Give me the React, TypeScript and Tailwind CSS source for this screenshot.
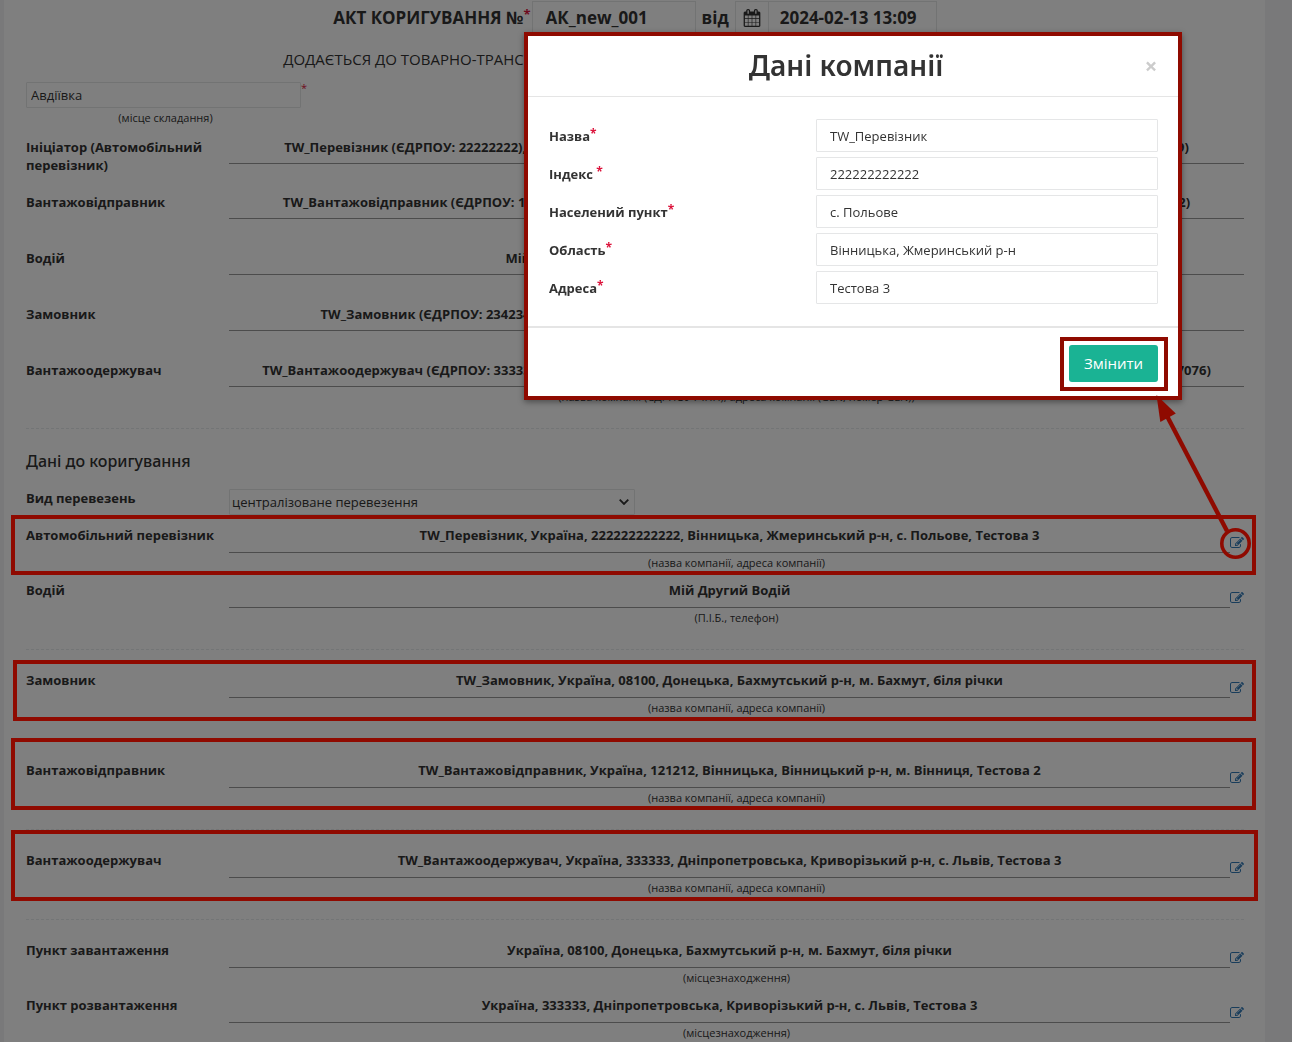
import React from 'react';

const requiredMark = 'font-bold text-[#dc143c]';

function PencilSquare() {
  return (
    <svg viewBox="0 0 1792 1792" className="size-[14px]" fill="currentColor" aria-hidden="true">
      <path d="M888 1184l116-116-152-152-116 116v56h96v96h56zM1328 464q-16-16-33 1l-350 350q-17 17-1 33t33-1l350-350q17-17 1-33zM1408 1058v190q0 119-84.5 203.5t-203.5 84.5h-832q-119 0-203.5-84.5t-84.5-203.5v-832q0-119 84.5-203.5t203.5-84.5h832q63 0 117 25 15 7 18 23 3 17-9 29l-49 49q-14 14-32 8-23-6-45-6h-832q-66 0-113 47t-47 113v832q0 66 47 113t113 47h832q66 0 113-47t47-113v-126q0-13 9-22l64-64q15-15 35-7t20 29zM1312 320l288 288-672 672h-288v-288zM1756 452l-92 92-288-288 92-92q28-28 68-28t68 28l152 152q28 28 28 68t-28 68z" />
    </svg>
  );
}

function Calendar() {
  return (
    <svg viewBox="0 0 1792 1792" className="size-[18px]" fill="currentColor" aria-hidden="true">
      <path d="M192 1664h288v-288h-288v288zM544 1664h320v-288h-320v288zM192 1312h288v-320h-288v320zM544 1312h320v-320h-320v320zM192 928h288v-288h-288v288zM928 1664h320v-288h-320v288zM544 928h320v-288h-320v288zM1312 1664h288v-288h-288v288zM928 1312h320v-320h-320v320zM576 448v-288q0-13-9.5-22.5t-22.5-9.5h-64q-13 0-22.5 9.5t-9.5 22.5v288q0 13 9.5 22.5t22.5 9.5h64q13 0 22.5-9.5t9.5-22.5zM1312 1312h288v-320h-288v320zM928 928h320v-288h-320v288zM1312 928h288v-288h-288v288zM1344 448v-288q0-13-9.5-22.5t-22.5-9.5h-64q-13 0-22.5 9.5t-9.5 22.5v288q0 13 9.5 22.5t22.5 9.5h64q13 0 22.5-9.5t9.5-22.5zM1728 384v1280q0 52-38 90t-90 38h-1408q-52 0-90-38t-38-90v-1280q0-52 38-90t90-38h128v-96q0-66 47-113t113-47h64q66 0 113 47t47 113v96h384v-96q0-66 47-113t113-47h64q66 0 113 47t47 113v96h128q52 0 90 38t38 90z" />
    </svg>
  );
}

function PartyRow({ label, value, caption }: { label: string; value: string; caption?: string }) {
  return (
    <div className="flex h-14 first:h-[55px]">
      <div className="w-[203px] shrink-0 pr-4 font-bold leading-[18px]">{label}</div>
      <div className="min-w-0 flex-1 text-center">
        <div className="flex h-[26px] justify-center border-b border-[#999] font-bold leading-[18px] whitespace-nowrap">
          {value}
        </div>
        {caption && <div className="text-[11px] leading-[20px]">{caption}</div>}
      </div>
    </div>
  );
}

type EditRowProps = {
  label: string;
  value: string;
  caption: string;
  highlight?: string;
  children?: React.ReactNode;
};

function EditRow({ label, value, caption, highlight, children }: EditRowProps) {
  return (
    <div className="relative flex h-[55px]">
      <div className="w-[203px] shrink-0 font-bold leading-[18px]">{label}</div>
      <div className="min-w-0 flex-1 text-center">
        <div className="flex">
          <div className="h-[27px] flex-1 border-b border-[#999] font-bold leading-[18px] whitespace-nowrap">
            {value}
          </div>
          <button type="button" aria-label={`Редагувати: ${label}`} className="mt-[10px] size-[14px] text-[#337ab7]">
            <PencilSquare />
          </button>
        </div>
        <div className="text-[11px] leading-[20px]">{caption}</div>
      </div>
      {highlight && <div className={`pointer-events-none absolute z-20 border-4 border-[#8f0a00] ${highlight}`} />}
      {children}
    </div>
  );
}

function Separator() {
  return <hr className="mt-[13px] mb-[21px] border-t border-dashed border-[#e7eaec]" />;
}

function Pointer() {
  return (
    <svg
      viewBox="1150 390 110 180"
      className="pointer-events-none absolute -top-[136px] -right-[16px] z-40 h-[180px] w-[110px]"
      fill="none"
      aria-hidden="true"
    >
      <circle cx="1235.5" cy="543.5" r="13.7" stroke="#8f0a00" strokeWidth="3.6" />
      <path d="M1167 416L1227 531" stroke="#8f0a00" strokeWidth="4.4" />
      <path d="M1156.5 395L1175.8 413.4L1160.3 422Z" fill="#8f0a00" />
    </svg>
  );
}

const fields = [
  { id: 'name', label: 'Назва', value: 'TW_Перевізник' },
  { id: 'index', label: 'Індекс ', value: '222222222222' },
  { id: 'city', label: 'Населений пункт', value: 'с. Польове' },
  { id: 'region', label: 'Область', value: 'Вінницька, Жмеринський р-н' },
  { id: 'address', label: 'Адреса', value: 'Тестова 3' },
];

function CompanyDialog() {
  return (
    <div className="pointer-events-none fixed inset-0 z-30 flex items-start justify-end pt-8 pr-[110px]">
      <div
        role="dialog"
        aria-labelledby="dialog-title"
        className="pointer-events-auto w-[658px] border-4 border-[#8f0a00] bg-white shadow-[0_2px_6px_rgba(0,0,0,0.4)]"
      >
        <div className="flex h-[61px] items-center border-b border-[#e5e5e5] px-5 pb-[2px]">
          <h4
            id="dialog-title"
            className="flex-1 text-center font-['Noto_Sans',sans-serif] text-[28px] leading-[30px] font-semibold"
          >
            Дані компанії
          </h4>
          <button type="button" aria-label="Закрити" className="w-[14px] text-[22px] leading-[20px] font-bold text-[#ccc]">
            ×
          </button>
        </div>
        <form className="flex flex-col gap-[5px] px-5 py-[22px]">
          {fields.map((f) => (
            <div key={f.id} className="flex items-center">
              <label htmlFor={f.id} className="w-[268px] pl-px font-bold whitespace-pre">
                {f.label}
                <span className={`align-[3px] text-[12px] leading-none ${requiredMark}`}>*</span>
              </label>
              <input
                id={f.id}
                defaultValue={f.value}
                className="h-[33px] min-w-0 flex-1 rounded-[1px] border border-[#e5e6e7] bg-white px-[13px]"
              />
            </div>
          ))}
        </form>
        <div className="flex justify-end border-t-2 border-[#e5e5e5] px-[10px] pt-[9px] pb-[5px]">
          <div className="border-4 border-[#8f0a00] pt-1 pr-[6px] pb-[5px] pl-[5px]">
            <button
              type="button"
              className="block h-[37px] w-[89px] rounded-[3px] bg-[#1ab394] pb-[2px] text-[15px] text-white"
            >
              Змінити
            </button>
          </div>
        </div>
      </div>
    </div>
  );
}

const company = '(назва компанії, адреса компанії)';

export default function App() {
  return (
    <div className="h-screen overflow-hidden bg-[#f3f3f4] font-['Open_Sans','Noto_Sans',sans-serif] text-[13px] leading-[18px] text-[#333]">
      <main className="mr-[27px] ml-1 min-h-full bg-white pt-px pr-[21px] pb-4 pl-[22px]">
        <div className="flex h-[33px] items-center justify-center text-[17px] font-bold">
          <label htmlFor="act-number" className="flex whitespace-nowrap">
            АКТ КОРИГУВАННЯ №<span className="-mt-1 pr-px text-[13px] text-[#dc143c]">*</span>
          </label>
          <input
            id="act-number"
            defaultValue="АК_new_001"
            className="h-[33px] w-[164px] border border-[#e5e6e7] px-[13px]"
          />
          <label htmlFor="act-date" className="px-[6px]">
            від
          </label>
          <span className="flex h-[33px] w-[33px] items-center justify-center border border-r-0 border-[#e5e6e7]">
            <Calendar />
          </span>
          <input
            id="act-date"
            defaultValue="2024-02-13 13:09"
            className="h-[33px] w-[169px] border border-[#e5e6e7] px-[11px]"
          />
        </div>
        <h2 className="mt-[15px] text-center text-[15px] leading-[20px] whitespace-nowrap">
          ДОДАЄТЬСЯ ДО ТОВАРНО-ТРАНСПОРТНОЇ НАКЛАДНОЇ № ТТН_new_0000001 ВІД 2024-02-13 13:05
        </h2>
        <div className="mt-[13px] flex items-start">
          <div className="w-[275px] text-center">
            <input
              id="place"
              aria-labelledby="place-label"
              defaultValue="Авдіївка"
              className="block h-[26px] w-full rounded-[1px] border border-[#e5e6e7] px-1"
            />
            <label id="place-label" htmlFor="place" className="block pl-1 text-[11px] leading-[20px]">
              (місце складання)
            </label>
          </div>
          <span className="text-[11px] leading-[12px] text-[#dc143c]">*</span>
        </div>

        <section className="mt-[10px]">
          <PartyRow
            label="Ініціатор (Автомобільний перевізник)"
            value="TW_Перевізник (ЄДРПОУ: 22222222), Україна, 222222222222, Вінницька, Жмеринський р-н, с. Польове, Тестова 3 (GLN: 98642325498209)"
          />
          <PartyRow
            label="Вантажовідправник"
            value="TW_Вантажовідправник (ЄДРПОУ: 12121212), Україна, 121212, Вінницька, Вінницький р-н, м. Вінниця, Тестова 2 (GLN: 98642325328802)"
          />
          <PartyRow label="Водій" value="Мій Другий Водій, посвідчення водія ВХХ123456, тел. +380501234567" />
          <PartyRow
            label="Замовник"
            value="TW_Замовник (ЄДРПОУ: 23423423), Україна, 08100, Донецька, Бахмутський р-н, м. Бахмут, біля річки (GLN: 98642325328802)"
          />
          <PartyRow
            label="Вантажоодержувач"
            value="TW_Вантажоодержувач (ЄДРПОУ: 33333333), Україна, 333333, Дніпропетровська, Криворізький р-н, с. Львів, Тестова 3 (GLN: 98642325307076)"
            caption="(назва компанії (ЄДРПОУ / ІПН), адреса компанії (GLN, номер GLN))"
          />
        </section>

        <hr className="mt-[11px] border-t border-dashed border-[#e7eaec]" />

        <section>
          <h3 className="mt-[22px] font-['Noto_Sans',sans-serif] text-[16px] leading-[20px] font-medium">
            Дані до коригування
          </h3>
          <div className="mt-[18px] mb-[11px] flex">
            <label htmlFor="kind" className="w-[203px] shrink-0 font-bold">
              Вид перевезень
            </label>
            <div className="relative w-1/3">
              <select
                id="kind"
                className="block h-[26px] w-full appearance-none rounded-[1px] border border-[#e5e6e7] bg-white pl-[2px]"
              >
                <option>централізоване перевезення</option>
              </select>
              <svg
                viewBox="0 0 10 6"
                className="pointer-events-none absolute top-[10px] right-[6px] h-[6px] w-[10px]"
                fill="none"
                stroke="currentColor"
                strokeWidth="1.8"
                aria-hidden="true"
              >
                <path d="M0.7 0.6L5 5L9.3 0.6" />
              </svg>
            </div>
          </div>

          <EditRow
            label="Автомобільний перевізник"
            value="TW_Перевізник, Україна, 222222222222, Вінницька, Жмеринський р-н, с. Польове, Тестова 3"
            caption={company}
            highlight="-top-[11px] -left-[15px] -right-[12px] h-[60px]"
          >
            <Pointer />
          </EditRow>
          <EditRow label="Водій" value="Мій Другий Водій" caption="(П.І.Б., телефон)" />
          <Separator />
          <EditRow
            label="Замовник"
            value="TW_Замовник, Україна, 08100, Донецька, Бахмутський р-н, м. Бахмут, біля річки"
            caption={company}
            highlight="-top-[11px] -left-[13px] -right-[12px] h-[61px]"
          />
          <Separator />
          <EditRow
            label="Вантажовідправник"
            value="TW_Вантажовідправник, Україна, 121212, Вінницька, Вінницький р-н, м. Вінниця, Тестова 2"
            caption={company}
            highlight="-top-[23px] -left-[15px] -right-[12px] h-[72px]"
          />
          <Separator />
          <EditRow
            label="Вантажоодержувач"
            value="TW_Вантажоодержувач, Україна, 333333, Дніпропетровська, Криворізький р-н, с. Львів, Тестова 3"
            caption={company}
            highlight="-top-[21px] -left-[15px] -right-[14px] h-[71px]"
          />
          <Separator />
          <EditRow
            label="Пункт завантаження"
            value="Україна, 08100, Донецька, Бахмутський р-н, м. Бахмут, біля річки"
            caption="(місцезнаходження)"
          />
          <EditRow
            label="Пункт розвантаження"
            value="Україна, 333333, Дніпропетровська, Криворізький р-н, с. Львів, Тестова 3"
            caption="(місцезнаходження)"
          />
        </section>
      </main>

      <div className="pointer-events-none fixed inset-0 z-10 bg-black/50" />
      <CompanyDialog />
    </div>
  );
}
